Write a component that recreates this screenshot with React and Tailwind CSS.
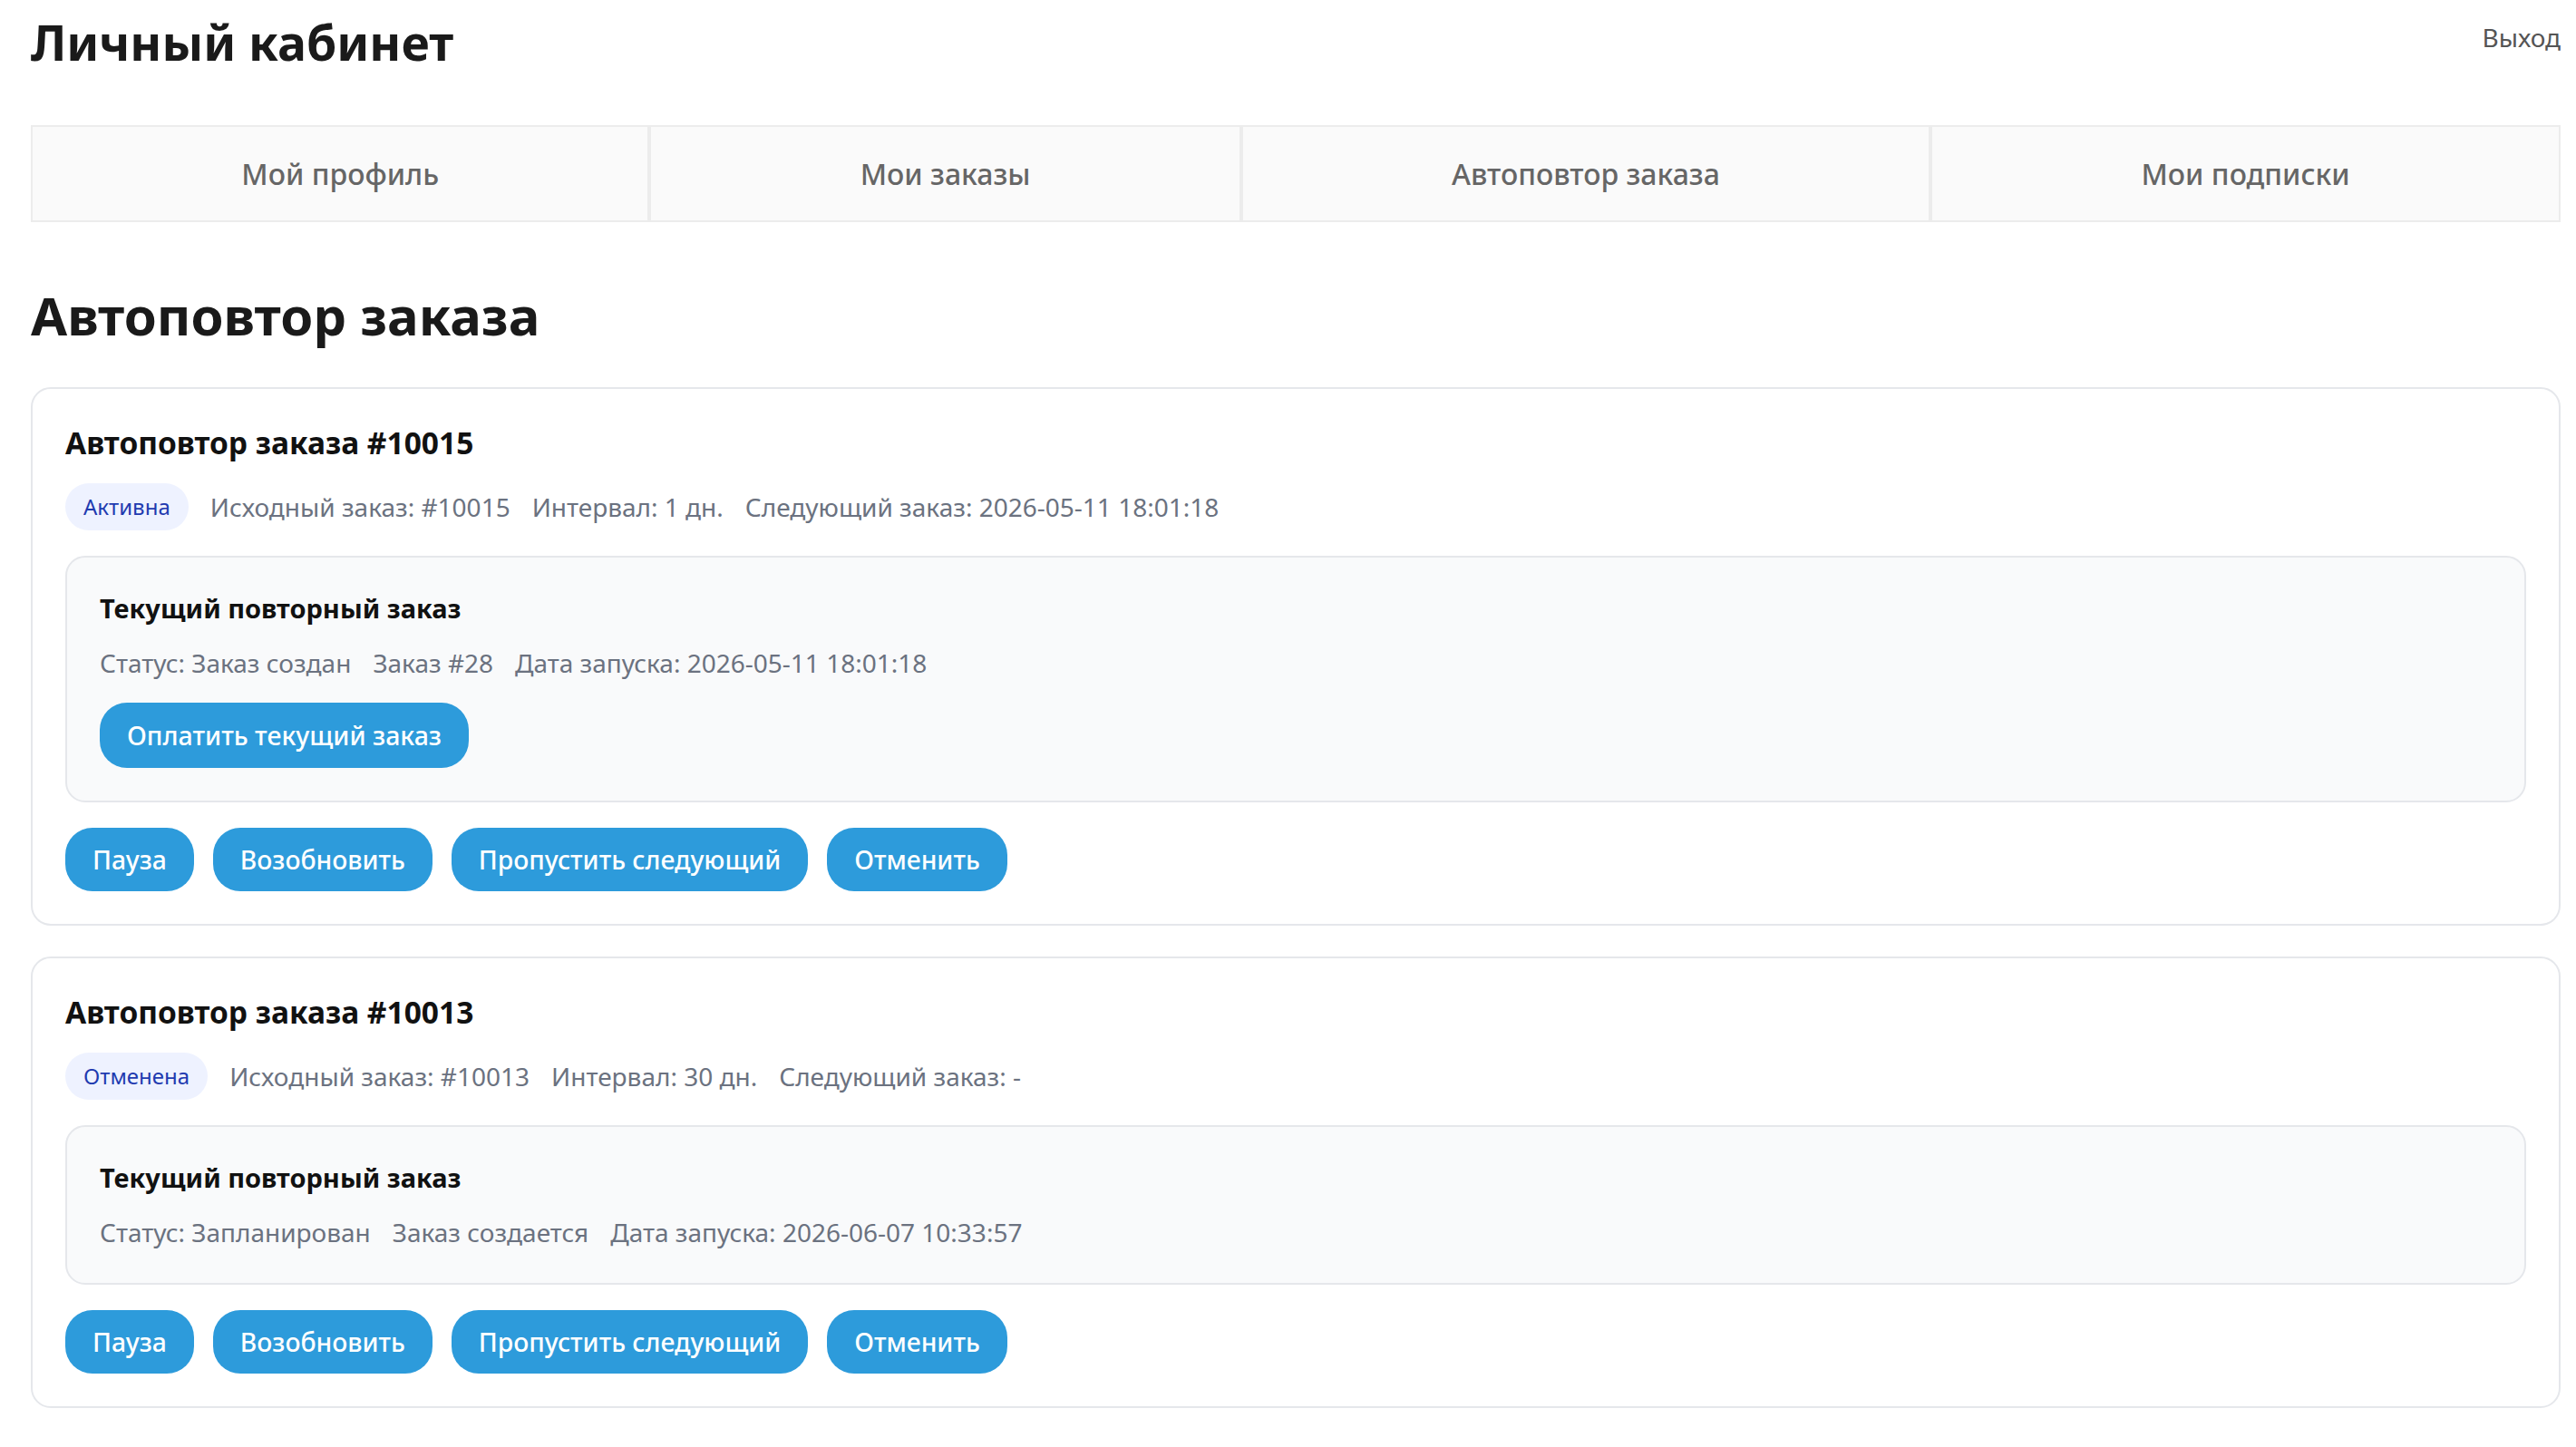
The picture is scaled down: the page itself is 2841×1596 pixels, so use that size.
import React from "react";

const font = { fontFamily: '"Noto Sans", "Open Sans", sans-serif' };

function Btn({ children }) {
  return (
    <button className="h-[70px] px-[30px] rounded-[30px] bg-[#2d9bdb] text-white text-[28.3px] font-medium leading-none">
      {children}
    </button>
  );
}

function Card({ id, status, source, interval, next, current, pay }) {
  return (
    <div className="border-2 border-[#e5e7eb] rounded-[22px] p-[36px] bg-white">
      <div className="text-[33.5px] font-bold text-[#111] leading-[47px]">Автоповтор заказа #{id}</div>
      <div className="flex items-center gap-[24px] mt-[21px]">
        <span className="h-[52px] px-[20px] rounded-full bg-[#eef2ff] text-[#1f3bb0] text-[24px] flex items-center">
          {status}
        </span>
        <div className="flex gap-[24px] text-[28px] text-[#6b7280]">
          <span>Исходный заказ: #{source}</span>
          <span>Интервал: {interval} дн.</span>
          <span>Следующий заказ: {next}</span>
        </div>
      </div>
      <div className="mt-[28px] border-2 border-[#e5e7eb] rounded-[22px] bg-[#f9fafb] p-[36px]">
        <div className="text-[29px] font-bold text-[#111] leading-[40px]">Текущий повторный заказ</div>
        <div className="flex gap-[24px] text-[28px] text-[#6b7280] leading-[40px] mt-[20px]">
          {current.map((c) => (
            <span key={c}>{c}</span>
          ))}
        </div>
        {pay && (
          <div className="mt-[24px]">
            <button className="h-[72px] px-[30px] rounded-[30px] bg-[#2d9bdb] text-white text-[28.5px] font-medium leading-none">
              Оплатить текущий заказ
            </button>
          </div>
        )}
      </div>
      <div className="flex gap-[21px] mt-[28px]">
        <Btn>Пауза</Btn>
        <Btn>Возобновить</Btn>
        <Btn>Пропустить следующий</Btn>
        <Btn>Отменить</Btn>
      </div>
    </div>
  );
}

export default function App() {
  const tabs = ["Мой профиль", "Мои заказы", "Автоповтор заказа", "Мои подписки"];
  return (
    <div style={font} className="min-h-screen bg-white pl-[34px] pr-[17px] pt-[14px] pb-[40px]">
      <div className="flex justify-between items-start">
        <h1 className="text-[53.5px] font-bold text-[#1a1a1a] leading-[66px]">Личный кабинет</h1>
        <a className="text-[28px] text-[#555] leading-[54px]">Выход</a>
      </div>
      <div className="flex mt-[58px] border-2 border-[#ececec] bg-[#fafafa]">
        {tabs.map((t, i) => (
          <div
            key={t}
            className={
              "flex-auto h-[103px] flex items-center justify-center text-[32px] font-medium text-[#666] " +
              (i > 0 ? "border-l-4 border-[#ececec]" : "")
            }
          >
            {t}
          </div>
        ))}
      </div>
      <h2 className="mt-[63px] text-[58px] font-bold text-[#1a1a1a] leading-[80px]">Автоповтор заказа</h2>
      <div className="mt-[39px] flex flex-col gap-[34px]">
        <Card
          id="10015"
          status="Активна"
          source="10015"
          interval="1"
          next="2026-05-11 18:01:18"
          current={["Статус: Заказ создан", "Заказ #28", "Дата запуска: 2026-05-11 18:01:18"]}
          pay
        />
        <Card
          id="10013"
          status="Отменена"
          source="10013"
          interval="30"
          next="-"
          current={["Статус: Запланирован", "Заказ создается", "Дата запуска: 2026-06-07 10:33:57"]}
        />
      </div>
    </div>
  );
}
